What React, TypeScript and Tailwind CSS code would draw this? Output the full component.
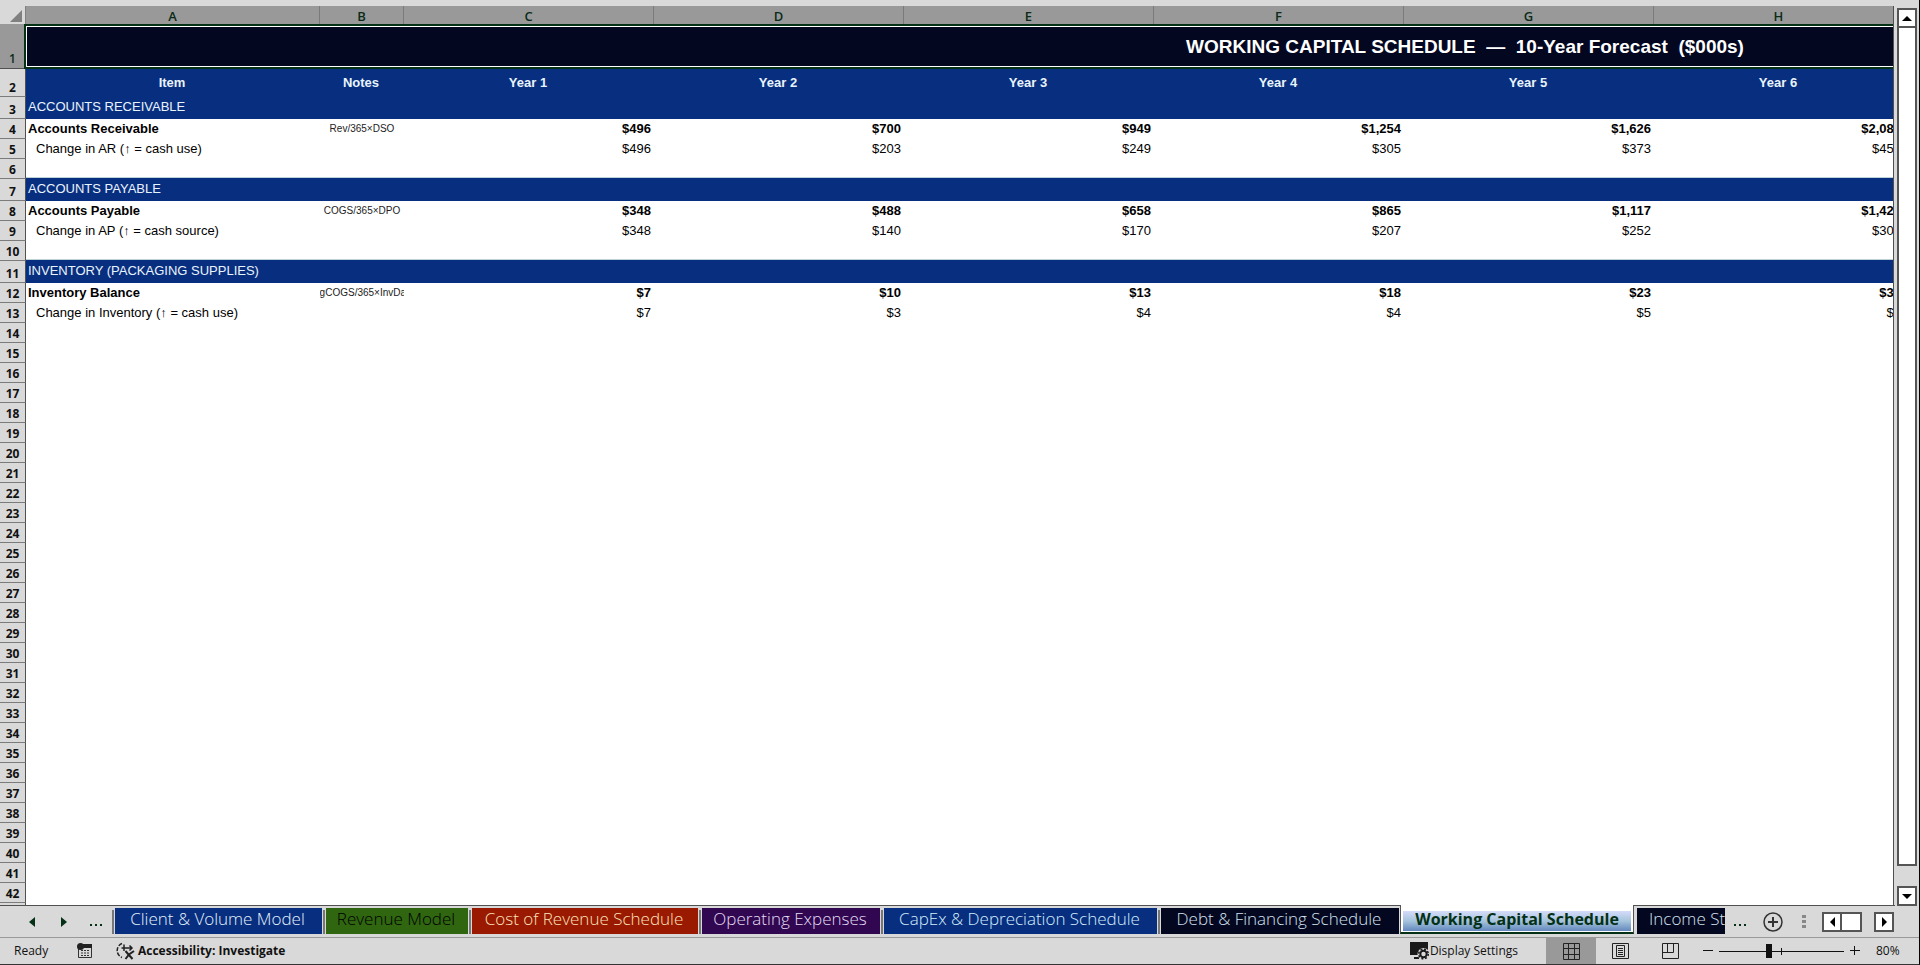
import React from "react";

type Line = { n: number; label: string; note: string; bold: boolean; values: string[] };
type RowSpec =
  | ({ kind: "data" } & Line)
  | { kind: "section"; n: number; label: string }
  | { kind: "gap"; n: number };

const COLUMNS = ["A", "B", "C", "D", "E", "F", "G", "H"];
const YEARS = ["Year 1", "Year 2", "Year 3", "Year 4", "Year 5", "Year 6"];

const ROWS: RowSpec[] = [
  { kind: "section", n: 3, label: "ACCOUNTS RECEIVABLE" },
  { kind: "data", n: 4, label: "Accounts Receivable", note: "Rev/365×DSO", bold: true, values: ["$496", "$700", "$949", "$1,254", "$1,626", "$2,085"] },
  { kind: "data", n: 5, label: "Change in AR (↑ = cash use)", note: "", bold: false, values: ["$496", "$203", "$249", "$305", "$373", "$459"] },
  { kind: "gap", n: 6 },
  { kind: "section", n: 7, label: "ACCOUNTS PAYABLE" },
  { kind: "data", n: 8, label: "Accounts Payable", note: "COGS/365×DPO", bold: true, values: ["$348", "$488", "$658", "$865", "$1,117", "$1,423"] },
  { kind: "data", n: 9, label: "Change in AP (↑ = cash source)", note: "", bold: false, values: ["$348", "$140", "$170", "$207", "$252", "$306"] },
  { kind: "gap", n: 10 },
  { kind: "section", n: 11, label: "INVENTORY (PACKAGING SUPPLIES)" },
  { kind: "data", n: 12, label: "Inventory Balance", note: "PkgCOGS/365×InvDays", bold: true, values: ["$7", "$10", "$13", "$18", "$23", "$30"] },
  { kind: "data", n: 13, label: "Change in Inventory (↑ = cash use)", note: "", bold: false, values: ["$7", "$3", "$4", "$4", "$5", "$6"] },
];

const EMPTY_ROWS = Array.from({ length: 30 }, (_, i) => i + 14);

const TABS = [
  { name: "Client & Volume Model", look: "w-[207px] bg-[#082e80] text-[#e4f3fb]" },
  { name: "Revenue Model", look: "w-[142px] bg-[#2f660f] text-black" },
  { name: "Cost of Revenue Schedule", look: "w-[226px] bg-[#991a00] text-[#fbe3bd]" },
  { name: "Operating Expenses", look: "w-[178px] bg-[#300750] text-[#e6dcf5]" },
  { name: "CapEx & Depreciation Schedule", look: "w-[273px] bg-[#082e80] text-[#d3eefb]" },
  { name: "Debt & Financing Schedule", look: "w-[238px] bg-[#030720] text-[#d5e2ef]" },
];

function RowHead({ n }: { n: number }) {
  return (
    <th scope="row" className="overflow-hidden border-r border-b border-r-[#505050] border-b-[#7b7b7b] bg-[#d9d9d9] p-0 text-center align-bottom font-['Open_Sans',sans-serif] text-[12px] leading-4 font-bold text-[#111]">
      {n}
    </th>
  );
}

function SheetRow({ row }: { row: RowSpec }) {
  if (row.kind === "section") {
    return (
      <tr className="h-[22px]">
        <RowHead n={row.n} />
        <td colSpan={12} className="bg-[#082e80] px-0.5 pt-0 pb-0.5 text-[13px] leading-4 font-medium text-[#e8f4fb]">
          {row.label}
        </td>
      </tr>
    );
  }
  if (row.kind === "gap") {
    return (
      <tr className="h-5">
        <RowHead n={row.n} />
        <td colSpan={12} className="border-b border-[#082e80] p-0 shadow-[inset_0_-1px_0_#bcd2d6]" />
      </tr>
    );
  }
  const weight = row.bold ? "font-bold" : "font-normal";
  return (
    <tr className="h-5">
      <RowHead n={row.n} />
      <td className={`${weight} ${row.bold ? "pl-0.5" : "pl-2.5"} py-0 pr-0 text-[13px] leading-4 whitespace-nowrap text-black`}>{row.label}</td>
      <td className="p-0 text-[10px] leading-4 text-[#222]">
        <div className="flex justify-center overflow-hidden whitespace-nowrap">{row.note}</div>
      </td>
      {row.values.map((v, i) => (
        <td key={i} className={`${weight} py-0 pr-[3px] pl-0 text-right text-[13px] leading-4 text-black`}>{v}</td>
      ))}
      <td colSpan={4} />
    </tr>
  );
}

function Sheet() {
  return (
    <div className="min-w-0 flex-1 overflow-hidden border-r border-[#505050] bg-white">
      <table className="w-[2904px] table-fixed border-separate border-spacing-0 font-['Liberation_Sans',Arial,sans-serif]">
        <colgroup>
          <col className="w-[26px]" />
          <col className="w-[294px]" />
          <col className="w-[84px]" />
          {Array.from({ length: 10 }, (_, i) => (
            <col key={i} className="w-[250px]" />
          ))}
        </colgroup>
        <thead>
          <tr className="h-[18px]">
            <th className="border-r border-[#808080] bg-[#d9d9d9] p-0 align-bottom">
              <svg viewBox="0 0 25 18" className="block h-[18px] w-[25px]" aria-hidden="true">
                <path d="M22 4v12H10z" fill="#808080" />
              </svg>
            </th>
            {COLUMNS.map((c) => (
              <th key={c} scope="col" className="border-r border-[#7b7b7b] bg-[#999] px-0 pt-0.5 pb-0 text-center font-['Open_Sans',sans-serif] text-[13px] leading-4 font-semibold text-[#0b2b18]">
                {c}
              </th>
            ))}
            <th colSpan={4} className="bg-[#999] p-0" />
          </tr>
        </thead>
        <tbody>
          <tr className="h-[45px]">
            <th scope="row" className="border-r border-b border-[#505050] bg-[#999] p-0 text-center align-bottom font-['Open_Sans',sans-serif] text-[12px] leading-[18px] font-semibold text-[#0b2b18]">1</th>
            <td colSpan={12} className="relative bg-[#030720] p-0 text-center text-[19px] leading-6 font-bold whitespace-pre text-white">
              WORKING CAPITAL SCHEDULE  —  10-Year Forecast  ($000s)
              <div className="pointer-events-none absolute inset-y-0 right-0 -left-0.5 border-2 border-[#043016]">
                <div className="h-full border border-white" />
              </div>
            </td>
          </tr>
          <tr className="h-[28px]">
            <RowHead n={2} />
            {["Item", "Notes", ...YEARS].map((h) => (
              <td key={h} className="bg-[#082e80] pt-0 pr-0.5 pb-px pl-0 text-center align-middle text-[13px] leading-4 font-bold text-[#e8f4fb]">{h}</td>
            ))}
            <td colSpan={4} className="bg-[#082e80] p-0" />
          </tr>
          {ROWS.map((row) => (
            <SheetRow key={row.n} row={row} />
          ))}
          {EMPTY_ROWS.map((n) => (
            <tr key={n} className="h-5">
              <RowHead n={n} />
              <td colSpan={12} />
            </tr>
          ))}
        </tbody>
      </table>
    </div>
  );
}

const arrowButton = "flex size-5 shrink-0 items-center justify-center border-2 border-[#555] bg-white";

function VerticalScroll() {
  return (
    <div className="-mb-px flex w-[25px] shrink-0 flex-col pt-0.5 pl-[3px]">
      <button type="button" aria-label="Scroll up" className={arrowButton}>
        <svg viewBox="0 0 10 5" className="h-[5px] w-2.5"><path d="M5 0l5 5H0z" /></svg>
      </button>
      <div className="-mt-0.5 mb-5 w-5 flex-1 border-2 border-[#555] bg-white" />
      <button type="button" aria-label="Scroll down" className={arrowButton}>
        <svg viewBox="0 0 10 5" className="h-[5px] w-2.5"><path d="M5 5l5-5H0z" /></svg>
      </button>
    </div>
  );
}

function Divider() {
  return <div className="mt-1 h-6 w-0.5 shrink-0 bg-[#777]" />;
}

function TabBar() {
  return (
    <div className="flex h-[33px] shrink-0 items-start border-b border-[#999] font-['Open_Sans',sans-serif]">
      <div className="flex min-w-0 flex-1 items-start border-t border-[#505050]">
        <div className="flex h-[31px] w-[112px] shrink-0 items-center pl-[29px]">
          <button type="button" aria-label="Previous sheet" className="mr-[26px]">
            <svg viewBox="0 0 6 10" className="h-2.5 w-1.5" fill="#043016"><path d="M6 0v10L0 5z" /></svg>
          </button>
          <button type="button" aria-label="Next sheet" className="mr-[22px]">
            <svg viewBox="0 0 6 10" className="h-2.5 w-1.5" fill="#043016"><path d="M0 0v10l6-5z" /></svg>
          </button>
          <button type="button" aria-label="More sheets">
            <svg viewBox="0 0 14 10" className="h-2.5 w-3.5" fill="#043016"><path d="M1 7h2v2H1zM6 7h2v2H6zM11 7h2v2h-2z" /></svg>
          </button>
        </div>
        {TABS.map((t) => (
          <React.Fragment key={t.name}>
            <Divider />
            <button type="button" className={`mt-0.5 mr-px ml-px flex h-[26px] shrink-0 items-center justify-center pr-0.5 pb-1 text-[17px] leading-5 font-light whitespace-nowrap ${t.look}`}>
              {t.name}
            </button>
          </React.Fragment>
        ))}
        <button type="button" aria-current="page" className="-mt-px flex h-[29px] w-[234px] shrink-0 items-end border-x border-b-2 border-x-[#555] border-b-[#043016] bg-white px-0.5 pb-px">
          <span className="flex h-5 w-full items-center justify-center bg-linear-to-b from-[#d5dcfa] via-[#a5c4dc] to-[#6488bd] pb-1 text-[16px] leading-5 font-bold whitespace-nowrap text-[#043016]">
            Working Capital Schedule
          </span>
        </button>
        <button type="button" className="mt-0.5 ml-[3px] flex h-[26px] w-[88px] shrink-0 items-center overflow-hidden bg-[#030720] pb-1 pl-3 text-left text-[17px] leading-5 font-light whitespace-nowrap text-[#d5e2ef]">
          Income Statement
        </button>
        <div className="flex h-[31px] flex-1 items-center pl-2">
          <svg viewBox="0 0 14 10" className="h-2.5 w-3.5" fill="#043016" aria-hidden="true"><path d="M1 7h2v2H1zM6 7h2v2H6zM11 7h2v2h-2z" /></svg>
          <button type="button" aria-label="New sheet" className="ml-4">
            <svg viewBox="0 0 20 20" className="size-5" fill="none" stroke="#333"><circle cx="10" cy="10" r="9" strokeWidth="1.5" /><path d="M10 5v10M5 10h10" strokeWidth="2" /></svg>
          </button>
          <svg viewBox="0 0 4 14" className="ml-[19px] h-3.5 w-1" fill="#888" aria-hidden="true"><path d="M0 0h4v3H0zM0 5h4v3H0zM0 10h4v3H0z" /></svg>
          <button type="button" aria-label="Scroll left" className={`ml-4 ${arrowButton}`}>
            <svg viewBox="0 0 5 10" className="h-2.5 w-[5px]"><path d="M5 0v10L0 5z" /></svg>
          </button>
          <div className="-ml-0.5 h-5 w-[22px] border-2 border-[#555] bg-white" />
          <button type="button" aria-label="Scroll right" className={`ml-3 ${arrowButton}`}>
            <svg viewBox="0 0 5 10" className="h-2.5 w-[5px]"><path d="M0 0v10l5-5z" /></svg>
          </button>
        </div>
      </div>
      <div className="w-6 shrink-0" />
    </div>
  );
}

function StatusBar() {
  return (
    <div className="flex h-[26px] shrink-0 items-center font-['Open_Sans',sans-serif] text-[12px] leading-4 text-[#111]">
      <span className="w-[63px] pl-3.5">Ready</span>
      <button type="button" aria-label="Record macro" className="ml-3.5">
        <svg viewBox="0 0 15 16" className="h-4 w-[15px]">
          <path d="M1.5 5v9.500h13V1.500H6" fill="none" stroke="#333" />
          <path d="M6 1h9v4H6z" fill="#222" />
          <circle cx="3.500" cy="3.500" r="3.500" fill="#222" />
          <path d="M4 7.500h9M4 10h9M4 12.500h9" stroke="#333" strokeDasharray="2 1" />
        </svg>
      </button>
      <button type="button" className="ml-6 flex items-center gap-[3px] font-bold">
        <svg viewBox="0 0 19 18" className="h-[18px] w-[19px]" fill="none" stroke="#222" strokeWidth="1.500">
          <path d="M6 1.500A7.500 7.500 0 0 0 6 15.500" strokeDasharray="4 1.500" />
          <path d="M5.500 6h10.500M13.500 3.500l2.500 2.500-2.500 2.500M8 2.500v6.500" />
          <path d="M9.500 9l3 3.500 4 4.500M18 9l-5 3.500-3.500 4.500" strokeWidth="2" />
        </svg>
        Accessibility: Investigate
      </button>
      <div className="flex-1" />
      <button type="button" className="flex items-center gap-px">
        <svg viewBox="0 0 20 18" className="h-[18px] w-5">
          <path d="M1 0h18v9H1zM1 8h9v5H1zM5 15h5v2H5z" fill="#1a1a1a" />
          <circle cx="14.500" cy="12" r="6" fill="#d9d9d9" />
          <circle cx="14.500" cy="12" r="3.200" fill="none" stroke="#1a1a1a" strokeWidth="2" />
          <circle cx="14.500" cy="12" r="4.800" fill="none" stroke="#1a1a1a" strokeWidth="1.500" strokeDasharray="2 1.770" />
        </svg>
        Display Settings
      </button>
      <button type="button" aria-label="Normal view" className="ml-7 flex h-[26px] w-[50px] items-center justify-center bg-[#999]">
        <svg viewBox="0 0 17 17" className="size-[17px]" fill="none" stroke="#222"><path d="M.5.5h16v16H.5zM.5 5.500h16M.5 11.500h16M5.500 .5v16M11.500 .5v16" /></svg>
      </button>
      <button type="button" aria-label="Page layout view" className="ml-4">
        <svg viewBox="0 0 17 16" className="h-4 w-[17px]" fill="none" stroke="#222"><path d="M.5.500h16v15H.5zM4.500 2.500h8v11h-8zM6 5.500h5M6 7.500h5M6 9.500h5M6 11.500h5" /></svg>
      </button>
      <button type="button" aria-label="Page break preview" className="ml-[33px]">
        <svg viewBox="0 0 17 16" className="h-4 w-[17px]" fill="none" stroke="#222"><path d="M.5.500h16v15H.5zM.5 9.500h11v-9M5.500.500v9" /></svg>
      </button>
      <button type="button" aria-label="Zoom out" className="ml-6">
        <svg viewBox="0 0 10 10" className="size-2.5" stroke="#111"><path d="M0 4.500h10" /></svg>
      </button>
      <div className="relative ml-1.5 h-4 w-[125px]">
        <svg viewBox="0 0 125 16" className="block h-4 w-[125px]" aria-hidden="true"><path d="M0 8.500h125M62.500 5v7" stroke="#111" /><path d="M47 1h6v14h-6z" fill="#111" /></svg>
        <input type="range" min={10} max={190} defaultValue={80} aria-label="Zoom" className="absolute inset-0 m-0 h-4 w-full opacity-0" />
      </div>
      <button type="button" aria-label="Zoom in" className="ml-1.5">
        <svg viewBox="0 0 10 10" className="size-2.5" stroke="#111"><path d="M0 4.500h10M4.500 0v9" /></svg>
      </button>
      <span className="ml-4 w-[43px]">80%</span>
    </div>
  );
}

export default function App() {
  return (
    <main className="flex h-screen flex-col overflow-hidden border-r border-b border-r-black border-b-[#333] bg-[#d9d9d9] pt-1.5">
      <div className="flex min-h-0 flex-1">
        <Sheet />
        <VerticalScroll />
      </div>
      <TabBar />
      <StatusBar />
    </main>
  );
}
